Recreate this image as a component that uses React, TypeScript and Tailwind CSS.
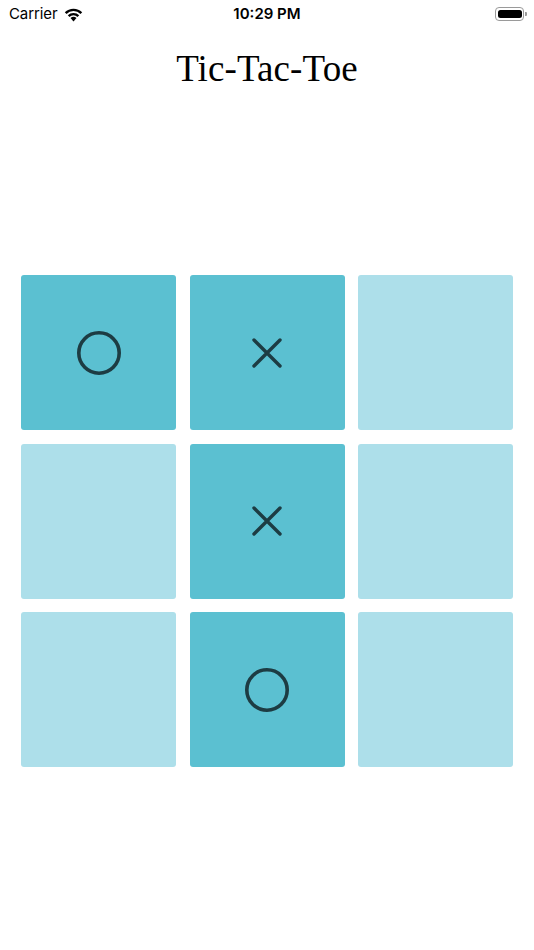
import React from "react";

type Cell = "O" | "X" | null;

const board: Cell[] = ["O", "X", null, null, "X", null, null, "O", null];

function OIcon() {
  return (
    <svg width="46" height="46" viewBox="0 0 46 46">
      <circle cx="23" cy="23" r="20.2" fill="none" stroke="#1d3c43" strokeWidth="3.6" />
    </svg>
  );
}

function XIcon() {
  return (
    <svg width="32" height="32" viewBox="0 0 32 32">
      <path d="M3 3 L29 29 M29 3 L3 29" stroke="#1d3c43" strokeWidth="3.4" strokeLinecap="round" />
    </svg>
  );
}

export default function App() {
  return (
    <div className="w-[534px] h-[950px] bg-white flex flex-col items-center relative" style={{ fontFamily: "Inter, 'Liberation Sans', sans-serif" }}>
      {/* status bar */}
      <div className="w-full h-[28px] flex items-center justify-between px-[9px] text-[15px] text-black relative">
        <div className="flex items-center gap-[6px]">
          <span className="tracking-[-0.1px]">Carrier</span>
          <svg width="21" height="15" viewBox="0 0 20 15">
            <path d="M10 14.5 L13 11 A4.6 4.6 0 0 0 7 11 Z" fill="#000" />
            <path d="M4.3 8.3 A8 8 0 0 1 15.7 8.3 L14 10 A5.6 5.6 0 0 0 6 10 Z" fill="#000" />
            <path d="M1.3 5.3 A12.3 12.3 0 0 1 18.7 5.3 L17 7 A9.9 9.9 0 0 0 3 7 Z" fill="#000" />
          </svg>
        </div>
        <span className="absolute left-1/2 -translate-x-1/2 font-semibold">10:29 PM</span>
        <div className="flex items-center mr-[-2px]">
          <div className="w-[29px] h-[13.5px] rounded-[4px] border border-[#9a9a9a] p-[1.5px]">
            <div className="w-full h-full bg-black rounded-[2.5px]" />
          </div>
          <div className="w-[2px] h-[4.5px] bg-[#9a9a9a] rounded-r-[1px] ml-[1px]" />
        </div>
      </div>

      <h1 className="mt-[18px] text-[37px] leading-[46px] text-black tracking-[0.1px]" style={{ fontFamily: "'Liberation Serif', 'DejaVu Serif', serif" }}>
        Tic-Tac-Toe
      </h1>

      <div className="mt-[183px] grid grid-cols-3 gap-[13.5px] w-[492px]">
        {board.map((c, i) => (
          <div
            key={i}
            className={`h-[155px] rounded-[3px] flex items-center justify-center ${c ? "bg-[#5bc0d1]" : "bg-[#addfea]"}`}
          >
            {c === "O" ? <OIcon /> : c === "X" ? <XIcon /> : null}
          </div>
        ))}
      </div>
    </div>
  );
}
